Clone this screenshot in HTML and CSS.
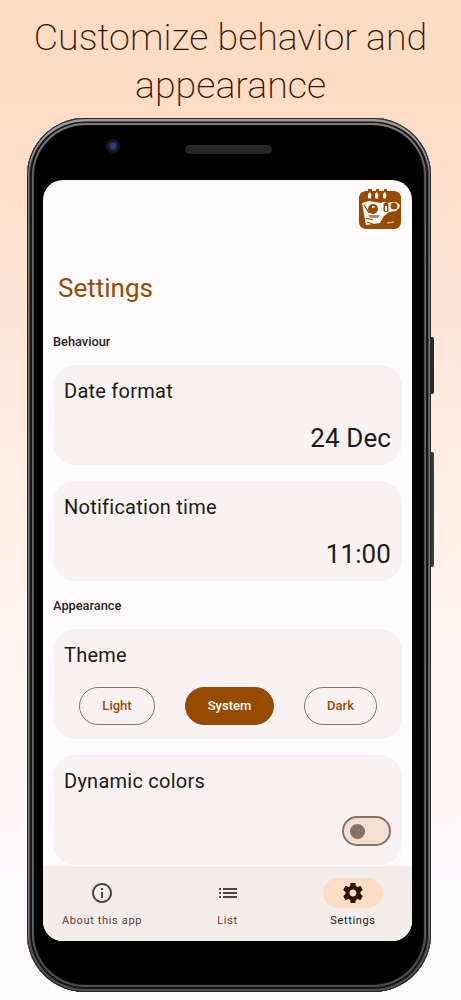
FILE: index.html
```html
<!DOCTYPE html>
<html lang="en">
<head>
<meta charset="utf-8">
<title>Settings</title>
<link rel="stylesheet" href="styles.css">
</head>
<body>
<h1 class="headline">Customize behavior and appearance</h1>
<div class="phone">
  <span class="side-btn side-btn-power"></span>
  <span class="side-btn side-btn-volume"></span>
  <div class="bezel-top">
    <span class="camera"></span>
    <span class="speaker"></span>
  </div>
  <div class="screen">
    <div class="content">
      <div class="app-bar">
        <svg class="logo" viewBox="0 0 42 40" width="42" height="40" aria-hidden="true">
          <path fill="#964B00" d="M7 2h28c4 0 7 3 7 7v24c0 4-3 7-7 7H7c-4 0-7-3-7-7V9c0-4 3-7 7-7z"/>
          <path fill="#964B00" d="M9 0h4v3H9zM17 0h3v3h-3zM25 0h3v3h-3z"/>
          <path fill="#FFFBFF" d="M9 5l2-2 1.500 3-1 4-2.500-1zM16 5l2-2 1.500 3-1 4-2.500-1zM24 5l2-2 1.500 3-1 4-2.500-1z"/>
          <path fill="#FFFBFF" d="M3 14l7-2 6 1 6 1 2-1 5 1 3-1 5 0 4 3-1 3-3 3-7 1-5 4-4 7-7 1-7 1-1-5-2-12z"/>
          <circle cx="14" cy="20" r="5" fill="#964B00"/>
          <path fill="#FFFBFF" d="M13 17h3l-1 2h-2z"/>
          <path fill="#B58A68" d="M9 26h12l-2 3H11z"/>
          <rect x="24.500" y="14" width="5" height="9" rx="1.500" fill="#964B00"/>
          <rect x="26" y="17" width="2" height="5" fill="#FFFBFF"/>
          <circle cx="35" cy="17" r="3.500" fill="#964B00"/>
          <path fill="#964B00" d="M22 35l4-6 6-4 6-2 2 1v9l-7 3z"/>
          <path stroke="#964B00" stroke-width="1.200" fill="none" d="M5 16l5 8M7 29l7 2M8 33l6 2"/>
          <path stroke="#FFFBFF" stroke-width="0.800" fill="none" d="M28 34l7-1"/>
        </svg>
      </div>
      <h2 class="page-title">Settings</h2>
      <h3 class="section-label">Behaviour</h3>
      <section class="card">
        <div class="card-title">Date format</div>
        <div class="card-value">24 Dec</div>
      </section>
      <section class="card">
        <div class="card-title">Notification time</div>
        <div class="card-value">11:00</div>
      </section>
      <h3 class="section-label section-label-second">Appearance</h3>
      <section class="card card-tall">
        <div class="card-title">Theme</div>
        <div class="theme-options">
          <button class="pill pill-light">Light</button>
          <button class="pill pill-system">System</button>
          <button class="pill pill-dark">Dark</button>
        </div>
      </section>
      <section class="card card-tall">
        <div class="card-title">Dynamic colors</div>
        <div class="toggle-row">
          <span class="toggle"><span class="toggle-thumb"></span></span>
        </div>
      </section>
    </div>
    <nav class="nav">
      <div class="nav-item">
        <span class="nav-icon">
          <svg viewBox="0 0 24 24" width="24" height="24" aria-hidden="true"><path fill="#51443B" d="M11 7h2v2h-2zm0 4h2v6h-2zm1-9C6.48 2 2 6.48 2 12s4.48 10 10 10 10-4.48 10-10S17.52 2 12 2zm0 18c-4.41 0-8-3.59-8-8s3.59-8 8-8 8 3.59 8 8-3.59 8-8 8z"/></svg>
        </span>
        <span class="nav-label">About this app</span>
      </div>
      <div class="nav-item">
        <span class="nav-icon">
          <svg viewBox="0 0 24 24" width="24" height="24" aria-hidden="true"><path fill="#51443B" d="M3 13h2v-2H3zm0 4h2v-2H3zm0-8h2V7H3zm4 4h14v-2H7zm0 4h14v-2H7zM7 7v2h14V7z"/></svg>
        </span>
        <span class="nav-label">List</span>
      </div>
      <div class="nav-item nav-item-active">
        <span class="nav-icon">
          <svg viewBox="0 0 24 24" width="24" height="24" aria-hidden="true"><path fill="#2E1500" d="M19.43 12.98c.04-.32.07-.64.07-.98s-.03-.66-.07-.98l2.11-1.65c.19-.15.24-.42.12-.64l-2-3.46c-.12-.22-.39-.3-.61-.22l-2.49 1c-.52-.4-1.08-.73-1.69-.98l-.38-2.65C14.46 2.18 14.25 2 14 2h-4c-.25 0-.46.18-.49.42l-.38 2.65c-.61.25-1.17.59-1.69.98l-2.49-1c-.23-.09-.49 0-.61.22l-2 3.46c-.13.22-.07.49.12.64l2.11 1.65c-.04.32-.07.65-.07.98s.03.66.07.98l-2.11 1.65c-.19.15-.24.42-.12.64l2 3.46c.12.22.39.3.61.22l2.49-1c.52.4 1.08.73 1.69.98l.38 2.65c.03.24.24.42.49.42h4c.25 0 .46-.18.49-.42l.38-2.65c.61-.25 1.17-.59 1.69-.98l2.49 1c.23.09.49 0 .61-.22l2-3.46c.12-.22.07-.49-.12-.64l-2.11-1.65zM12 15.5c-1.93 0-3.5-1.57-3.5-3.5s1.57-3.5 3.5-3.5 3.5 1.57 3.5 3.5-1.57 3.5-3.5 3.5z"/></svg>
        </span>
        <span class="nav-label">Settings</span>
      </div>
    </nav>
  </div>
</div>
</body>
</html>
```
FILE: styles.css
```css
* { box-sizing: border-box; }
html, body { margin: 0; padding: 0; }
body {
  width: 461px;
  height: 1000px;
  overflow: hidden;
  background: linear-gradient(180deg, #FFDBC3 0%, #FFDCC6 12%, #FFF0E6 50%, #FFFBFF 90%);
  font-family: Roboto, "Liberation Sans", sans-serif;
  color: #201A17;
}
.headline {
  margin: 0;
  padding: 13px 20px 0;
  height: 118px;
  text-align: center;
  font-weight: 200;
  font-size: 37.6px;
  line-height: 48px;
  color: #2E1500;
}
.phone {
  position: relative;
  margin-left: 27px;
  width: 404px;
  height: 874px;
  border-radius: 58px;
  background: #000;
  padding: 0 18px 0 16px;
  box-shadow:
    inset 0 0 0 1px #262626,
    inset 0 2px 0 1.5px #9a9c9e,
    inset 0 0 0 3px #505153,
    inset 0 0 0 5px #161616,
    inset 0 1.5px 0 5.5px #7a7c7e,
    inset 0 0 0 7px #4c4d4f,
    inset 0 0 0 8px #0c0c0c;
}
.side-btn {
  position: absolute;
  right: -3px;
  width: 3px;
  background: #2b2b2b;
  border-radius: 0 2px 2px 0;
}
.side-btn-power { top: 219px; height: 57px; }
.side-btn-volume { top: 334px; height: 115px; background: #3a3a3a; }
.bezel-top {
  height: 62px;
  position: relative;
}
.camera {
  position: absolute;
  left: 63px;
  top: 21px;
  width: 14px;
  height: 14px;
  border-radius: 50%;
  background: radial-gradient(circle, #2f3c70 0 25%, #14161f 50%, #1c1d22 100%);
}
.speaker {
  position: absolute;
  left: 142px;
  top: 27px;
  width: 87px;
  height: 9px;
  border-radius: 5px;
  background: #262626;
}
.screen {
  width: 369px;
  height: 761px;
  background: #FFFBFF;
  border-radius: 20px;
  overflow: hidden;
  display: flex;
  flex-direction: column;
}
.content {
  flex: 1;
  padding: 0 10px;
  min-height: 0;
}
.app-bar {
  display: flex;
  justify-content: flex-end;
  padding: 9px 1px 0 0;
  height: 91px;
}
.logo { display: block; }
.page-title {
  margin: 0;
  padding-left: 5px;
  font-weight: 400;
  font-size: 26px;
  line-height: 34px;
  color: #964B00;
}
.section-label {
  margin: 0;
  font-weight: 500;
  font-size: 12.8px;
  line-height: 20px;
  color: #2a2320;
  padding-top: 27px;
  height: 60px;
}
.section-label-second {
  height: 32px;
  padding-top: 0;
  line-height: 18px;
}
.card {
  width: 349px;
  height: 100px;
  border-radius: 22px;
  background: #F8F3F2;
  padding: 12px 11px 0;
  margin-bottom: 16px;
}
.card-tall { height: 110px; }
.card-title {
  font-size: 20px;
  line-height: 28px;
  letter-spacing: 0.25px;
}
.card-value {
  text-align: right;
  font-size: 26px;
  line-height: 34px;
  margin-top: 16px;
  letter-spacing: 0.1px;
}
.theme-options {
  display: flex;
  justify-content: space-between;
  padding: 4px 14px 0 15px;
  margin-top: 14px;
}
.pill {
  font: 500 13px/20px Roboto, "Liberation Sans", sans-serif;
  height: 38px;
  padding: 0;
  border-radius: 19px;
  border: 1px solid #85736A;
  background: transparent;
  color: #964B00;
}
.pill-light { width: 76px; }
.pill-system { width: 89px; background: #964B00; border-color: #964B00; color: #FFFFFF; }
.pill-dark { width: 73px; }
.toggle-row {
  display: flex;
  justify-content: flex-end;
  margin-top: 21px;
}
.toggle {
  display: flex;
  align-items: center;
  width: 49px;
  height: 30px;
  border-radius: 15px;
  border: 2px solid #85736A;
  background: #F4DFD0;
  padding-left: 6px;
}
.toggle-thumb {
  width: 15px;
  height: 15px;
  border-radius: 50%;
  background: #85736A;
}
.nav {
  height: 75px;
  flex: none;
  background: #F5EDE9;
  display: flex;
  justify-content: space-between;
  padding: 0 19px;
}
.nav-item {
  width: 80px;
  display: flex;
  flex-direction: column;
  align-items: center;
  padding-top: 12px;
  white-space: nowrap;
}
.nav-icon {
  width: 60px;
  height: 30px;
  border-radius: 15px;
  display: flex;
  align-items: center;
  justify-content: center;
}
.nav-item-active .nav-icon { background: #FFDCC4; }
.nav-label {
  margin-top: 5px;
  font-weight: 400;
  font-size: 11px;
  line-height: 16px;
  letter-spacing: 0.65px;
  color: #51443B;
}
.nav-item-active .nav-label { color: #201A17; }
```
